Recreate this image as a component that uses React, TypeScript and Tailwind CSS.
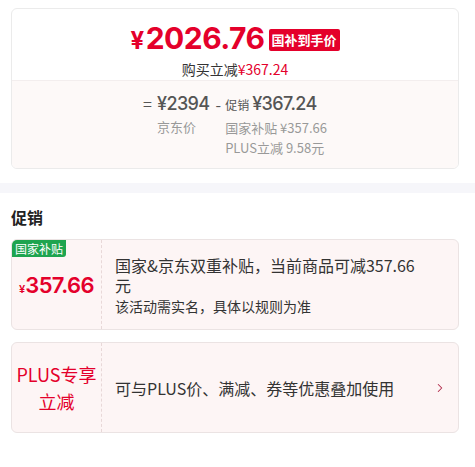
import { ChevronRight } from 'lucide-react';

const cjk = "font-['Noto_Sans_CJK_SC','Noto_Sans',sans-serif]";
const num = "font-['Inter','Noto_Sans_CJK_SC',sans-serif]";

/**
 * 价格明细 + 促销列表
 */
export default function App() {
  return (
    <div className={`w-[475px] min-h-[467px] bg-white text-[#333] ${cjk}`}>
      {/* 到手价卡片 */}
      <div className="pl-[11px] pr-[16px] pt-2">
        <div className="overflow-hidden rounded-md border border-[#ebebeb]">
          <div className="flex h-[71px] flex-col items-center pt-[14px]">
            <div className="flex items-center gap-1">
              <span className={`${num} text-[30px] font-bold leading-[30px] tracking-[-0.5px] text-[#e4002b]`}>
                <span className="mr-[2px] text-[24px]">¥</span>2026.76
              </span>
              <span className="rounded-[2px] bg-[#e4002b] px-[3px] text-[13px] font-bold leading-[22px] text-white">
                国补到手价
              </span>
            </div>
            <div className="mt-[5px] text-[14px] leading-[16px] text-[#333]">
              购买立减<span className="text-[#e4002b]">¥367.24</span>
            </div>
          </div>
          <div className="flex h-[88px] justify-center border-t border-[#f3eeee] bg-[#fdf9f8] pt-3">
            <div className="flex items-start text-[#555]">
              <span className="w-[14px] text-[16px] leading-[20px]">=</span>
              <div className="flex flex-col">
                <span className={`${num} text-[18px] font-medium leading-[22px] tracking-[-0.6px]`}>¥2394</span>
                <span className="mt-[3px] text-[13px] leading-[17px] text-[#999]">京东价</span>
              </div>
              <span className="ml-[6px] mr-[4px] text-[16px] leading-[22px]">-</span>
              <div className="flex flex-col">
                <span className="flex items-baseline gap-[3px]">
                  <span className="text-[12px] leading-[22px]">促销</span>
                  <span className={`${num} text-[18px] font-medium leading-[22px] tracking-[-0.6px]`}>¥367.24</span>
                </span>
                <span className="mt-[3px] text-[13px] leading-[17px] text-[#999]">
                  国家补贴 ¥357.66
                </span>
                <span className="mt-[3px] text-[13px] leading-[17px] text-[#999]">PLUS立减 9.58元</span>
              </div>
            </div>
          </div>
        </div>
      </div>

      <div className="mt-[14px] h-[10px] bg-[#f6f6fa]" />

      {/* 促销 */}
      <div className="pb-8 pl-[11px] pr-[16px]">
        <h2 className="pt-[12px] text-[16px] font-bold leading-[24px] text-[#222]">促销</h2>

        <div className="mt-[10px] flex h-[91px] overflow-hidden rounded-md border border-[#ebe3e3] bg-[#fdf5f5]">
          <div className="relative flex w-[90px] shrink-0 items-center justify-center border-r border-dashed border-[#e8d8d8]">
            <span className="absolute left-0 top-0 rounded-br-[3px] bg-[#1ea44f] px-[3px] text-[12px] leading-[17px] text-white">
              国家补贴
            </span>
            <span className={`${num} mt-[2px] font-semibold text-[#e4002b]`}>
              <span className="text-[11px]">¥</span>
              <span className="text-[22px] tracking-[-0.6px]">357.66</span>
            </span>
          </div>
          <div className="flex flex-1 flex-col justify-center pl-[13px] pr-[30px]">
            <p className="text-[16px] leading-[20px] text-[#333]">国家&京东双重补贴，当前商品可减357.66元</p>
            <p className="mt-[2px] text-[14px] leading-[18px] text-[#333]">该活动需实名，具体以规则为准</p>
          </div>
        </div>

        <div className="mt-[12px] flex h-[91px] overflow-hidden rounded-md border border-[#ebe3e3] bg-[#fdf5f5]">
          <div className="flex w-[90px] shrink-0 items-center justify-center border-r border-dashed border-[#e8d8d8] text-center text-[18px] leading-[27px] text-[#e4002b]">
            PLUS专享
            <br />
            立减
          </div>
          <div className="flex flex-1 items-center justify-between pl-[13px] pr-[11px]">
            <p className="text-[16px] leading-[20px] text-[#333]">可与PLUS价、满减、券等优惠叠加使用</p>
            <ChevronRight size={14} strokeWidth={1.75} className="text-[#b02a4a]" />
          </div>
        </div>
      </div>
    </div>
  );
}
